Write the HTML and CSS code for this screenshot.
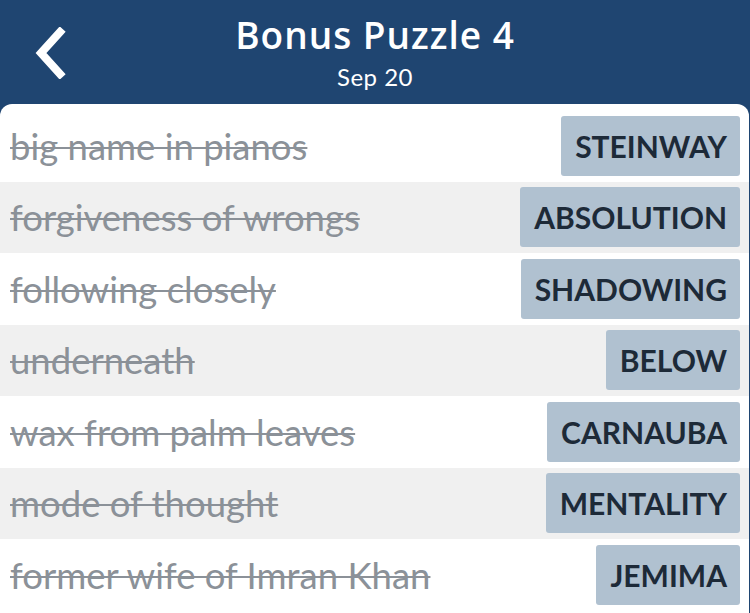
FILE: index.html
```html
<!DOCTYPE html>
<html lang="en">
<head>
    <meta charset="UTF-8">
    <meta name="viewport" content="width=device-width, initial-scale=1.0">
    <title>Bonus Puzzle 4</title>
    <link rel="stylesheet" href="styles.css">
</head>
<body>

<div id="app">
    <div class="top-bar">
        <button class="back">
            <svg width="34" height="52" viewBox="0 0 34 52">
                <path d="M28 5 L9 26 L28 47" fill="none" stroke="#fff" stroke-width="8" stroke-linecap="square"/>
            </svg>
        </button>
        <div class="title">Bonus Puzzle 4</div>
        <div class="subtitle">Sep 20</div>
    </div>

    <div class="clue-list">
        <div class="clue">
            <span class="clue-text">big name in pianos</span>
            <span class="answer">STEINWAY</span>
        </div>
        <div class="clue">
            <span class="clue-text">forgiveness of wrongs</span>
            <span class="answer">ABSOLUTION</span>
        </div>
        <div class="clue">
            <span class="clue-text">following closely</span>
            <span class="answer">SHADOWING</span>
        </div>
        <div class="clue">
            <span class="clue-text">underneath</span>
            <span class="answer">BELOW</span>
        </div>
        <div class="clue">
            <span class="clue-text">wax from palm leaves</span>
            <span class="answer">CARNAUBA</span>
        </div>
        <div class="clue">
            <span class="clue-text">mode of thought</span>
            <span class="answer">MENTALITY</span>
        </div>
        <div class="clue">
            <span class="clue-text">former wife of Imran Khan</span>
            <span class="answer">JEMIMA</span>
        </div>
    </div>
</div>

</body>
</html>
```

FILE: styles.css
```css
body {
    font-family: 'Lato', 'Open Sans', sans-serif;
    margin: 0;
    padding: 0;
    background-color: #ffffff;
}

#app {
    width: 750px;
    height: 613px;
    overflow: hidden;
    background-color: #1f4571;
}

.top-bar {
    position: relative;
    height: 104px;
    color: #fff;
    text-align: center;
}

.back {
    position: absolute;
    left: 32px;
    top: 27px;
    padding: 0;
    background: none;
    border: none;
}

.title {
    padding-top: 10px;
    font-family: 'Open Sans', sans-serif;
    font-size: 37px;
    font-weight: 600;
    letter-spacing: 1px;
    line-height: 50px;
}

.subtitle {
    font-size: 24px;
    letter-spacing: 0.5px;
    line-height: 34px;
}

.clue-list {
    background-color: #fff;
    border-radius: 12px 12px 0 0;
    padding-top: 6px;
    height: 503px;
    margin-right: 1px;
}

.clue {
    display: flex;
    align-items: center;
    justify-content: space-between;
    height: 71.5px;
    padding: 0 9px 0 10px;
}

.clue:nth-child(even) {
    background-color: #f0f0f0;
}

.clue-text {
    font-size: 36.5px;
    color: #8b9198;
    text-decoration: line-through;
    text-decoration-thickness: 2px;
}

.answer {
    height: 60px;
    line-height: 60px;
    padding: 0 13px 0 14px;
    border-radius: 3px;
    background-color: #b0c1d0;
    color: #1d2a38;
    font-size: 30px;
    font-weight: bold;
}
```
